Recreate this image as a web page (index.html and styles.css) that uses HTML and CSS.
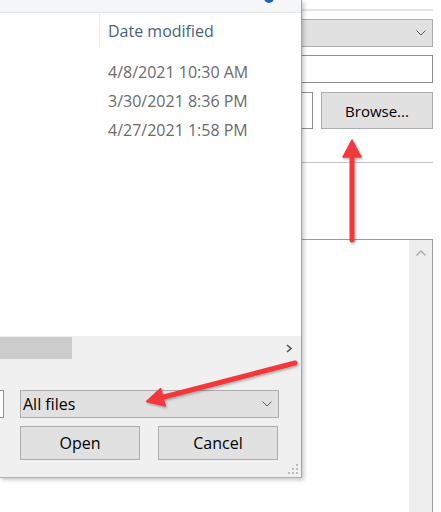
FILE: index.html
```html
<!DOCTYPE html>
<html lang="en">
<head>
    <meta charset="UTF-8">
    <meta name="viewport" content="width=device-width, initial-scale=1.0">
    <title>Open file</title>
    <link rel="stylesheet" href="styles.css">
</head>
<body>
    <div class="desktop">

        <!-- Background window -->
        <div class="window">
            <div class="top-rule"></div>
            <div class="combo">
                <svg class="chevron" width="10" height="6" viewBox="0 0 10 6"><path d="M0.5 0.5 L5 5 L9.5 0.5" fill="none" stroke="#5c5c5c" stroke-width="1"/></svg>
            </div>
            <div class="textbox"></div>
            <div class="browse-row">
                <div class="textbox small"></div>
                <button class="btn browse-btn">Browse...</button>
            </div>
            <div class="mid-rule"></div>
            <div class="memo">
                <div class="vscroll">
                    <svg width="10" height="6" viewBox="0 0 10 6"><path d="M0.5 5.5 L5 1 L9.5 5.5" fill="none" stroke="#a6a6a6" stroke-width="1.3"/></svg>
                </div>
            </div>
        </div>

        <!-- File dialog -->
        <div class="dialog">
            <div class="dialog-top">
                <span class="help-dot"></span>
            </div>
            <div class="file-list">
                <div class="list-head">
                    <div class="col-name"></div>
                    <div class="col-date">Date modified</div>
                </div>
                <div class="file-row">4/8/2021 10:30 AM</div>
                <div class="file-row">3/30/2021 8:36 PM</div>
                <div class="file-row">4/27/2021 1:58 PM</div>
            </div>
            <div class="hscroll">
                <div class="thumb"></div>
                <svg class="arrow-right" width="6" height="9" viewBox="0 0 6 9"><path d="M1 1 L5 4.5 L1 8" fill="none" stroke="#555" stroke-width="1.6"/></svg>
            </div>
            <div class="dialog-bottom">
                <div class="filter-row">
                    <div class="name-box"></div>
                    <div class="combo filter">
                        <span>All files</span>
                        <svg class="chevron" width="10" height="6" viewBox="0 0 10 6"><path d="M0.5 0.5 L5 5 L9.5 0.5" fill="none" stroke="#5c5c5c" stroke-width="1"/></svg>
                    </div>
                </div>
                <div class="button-row">
                    <button class="btn">Open</button>
                    <button class="btn">Cancel</button>
                </div>
                <svg class="grip" width="12" height="12" viewBox="0 0 12 12">
                    <rect x="9" y="1" width="2" height="2" fill="#bbb"/>
                    <rect x="5" y="5" width="2" height="2" fill="#bbb"/>
                    <rect x="9" y="5" width="2" height="2" fill="#bbb"/>
                    <rect x="1" y="9" width="2" height="2" fill="#bbb"/>
                    <rect x="5" y="9" width="2" height="2" fill="#bbb"/>
                    <rect x="9" y="9" width="2" height="2" fill="#bbb"/>
                </svg>
            </div>
        </div>

        <!-- Annotation arrows -->
        <svg class="arrows" width="441" height="512" viewBox="0 0 441 512">
            <defs>
                <filter id="shade" x="-20%" y="-20%" width="140%" height="140%">
                    <feDropShadow dx="1" dy="1.5" stdDeviation="1" flood-color="#000" flood-opacity="0.3"/>
                </filter>
            </defs>
            <g filter="url(#shade)" fill="#f2393b" stroke="#f2393b">
                <line x1="352" y1="240" x2="352" y2="154" stroke-width="5" stroke-linecap="round"/>
                <polygon points="352,140 361,157 343,157" stroke-width="1.5" stroke-linejoin="round"/>
                <line x1="295" y1="363" x2="160" y2="398" stroke-width="5" stroke-linecap="round"/>
                <polygon points="146.5,401.5 160.6,388.5 165.2,405.9" stroke-width="1.5" stroke-linejoin="round"/>
            </g>
        </svg>
    </div>
</body>
</html>
```

FILE: styles.css
```css
body {
    margin: 0;
    background: #fff;
    font-family: "Segoe UI", "Open Sans", "Noto Sans", sans-serif;
    font-size: 16px;
    color: #000;
}
.desktop {
    position: relative;
    display: grid;
    width: 441px;
    height: 512px;
    overflow: hidden;
}

/* background window */
.window {
    grid-area: 1 / 1;
    display: flex;
    flex-direction: column;
    padding: 0 8px 0 290px;
}
.top-rule {
    margin-top: 9px;
    height: 2px;
    background: #e4e4e4;
}
.combo {
    box-sizing: border-box;
    display: flex;
    align-items: center;
    justify-content: space-between;
    height: 28px;
    margin-top: 8px;
    padding: 0 6px 0 2px;
    background: #e1e1e1;
    border: 1px solid #adadad;
}
.combo .chevron {
    margin-left: auto;
}
.textbox {
    box-sizing: border-box;
    height: 28px;
    margin-top: 8px;
    background: #fff;
    border: 1px solid #8f8f8f;
}
.browse-row {
    display: flex;
    gap: 8px;
    margin-top: 9px;
    height: 37px;
}
.textbox.small {
    width: 23px;
    height: 37px;
    margin: 0;
}
.btn {
    box-sizing: border-box;
    font: inherit;
    color: #000;
    background: #e1e1e1;
    border: 1px solid #adadad;
    padding: 0;
}
.browse-btn {
    flex: 1;
    font-size: 15px;
}
.mid-rule {
    margin-top: 33px;
    height: 1px;
    background: #c4c4c4;
}
.memo {
    flex: 1;
    display: flex;
    justify-content: flex-end;
    margin-top: 76px;
    border-top: 1px solid #9c9c9c;
    border-right: 1px solid #9c9c9c;
}
.vscroll {
    width: 23px;
    background: #eeeeee;
    display: flex;
    justify-content: center;
    padding-top: 10px;
}
.vscroll svg {
    margin-left: 1px;
}

/* file dialog */
.dialog {
    grid-area: 1 / 1;
    z-index: 1;
    align-self: start;
    box-sizing: border-box;
    width: 302px;
    height: 478px;
    display: flex;
    flex-direction: column;
    background: #f0f0f0;
    border-right: 1px solid #a3a3a3;
    border-bottom: 1px solid #b0b0b0;
    box-shadow: 2px 2px 4px rgba(0, 0, 0, 0.22);
}
.dialog-top {
    height: 12px;
    display: flex;
    justify-content: flex-end;
    padding-right: 27px;
    background: #f5f6f7;
    border-bottom: 1px solid #e6e6e6;
    overflow: hidden;
}
.help-dot {
    width: 10px;
    height: 10px;
    margin-top: -7px;
    border-radius: 50%;
    background: #1d63c3;
}
.file-list {
    height: 323px;
    background: #fff;
}
.list-head {
    display: flex;
    height: 35px;
}
.col-name {
    width: 99px;
    border-right: 1px solid #ececec;
}
.col-date {
    padding: 8px 0 0 8px;
    line-height: 20px;
    color: #4b5f7e;
}
.file-row {
    padding-left: 108px;
    line-height: 29px;
    color: #6b6b6b;
}
.list-head + .file-row {
    margin-top: 10px;
}
.hscroll {
    height: 24px;
    display: flex;
    align-items: flex-start;
    justify-content: space-between;
}
.thumb {
    width: 72px;
    height: 22px;
    margin-top: 1px;
    background: #cdcdcd;
}
.arrow-right {
    margin: 8px 9px 0 0;
}
.dialog-bottom {
    flex: 1;
    display: flex;
    flex-direction: column;
}
.filter-row {
    display: flex;
    margin-top: 30px;
    gap: 16px;
}
.name-box {
    box-sizing: border-box;
    width: 4px;
    height: 28px;
    background: #fff;
    border: 1px solid #8f8f8f;
    border-left: none;
}
.combo.filter {
    width: 259px;
    margin-top: 0;
    padding-right: 6px;
}
.button-row {
    display: flex;
    gap: 18px;
    margin: 8px 0 0 20px;
}
.button-row .btn {
    width: 120px;
    height: 34px;
}
.grip {
    align-self: flex-end;
    margin: 3px 2px 0 0;
}

/* annotation overlay */
.arrows {
    position: absolute;
    left: 0;
    top: 0;
    z-index: 2;
    pointer-events: none;
}
```
